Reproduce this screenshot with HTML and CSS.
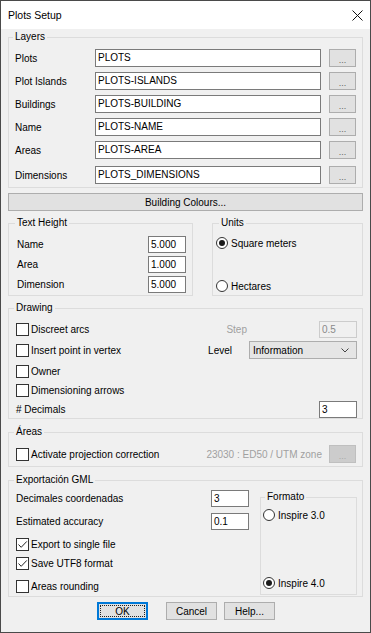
FILE: index.html
```html
<!DOCTYPE html>
<html lang="en">

<head>
    <meta charset="UTF-8">
    <title>Plots Setup</title>
    <link rel="stylesheet" href="styles.css">
</head>

<body>
    <div class="window">
        <div class="titlebar">
            <span class="title">Plots Setup</span>
            <svg class="close" width="11" height="11" viewBox="0 0 11 11">
                <path d="M0.5 0.5 L10.5 10.5 M10.5 0.5 L0.5 10.5" stroke="#111" stroke-width="1" fill="none" />
            </svg>
        </div>

        <div class="content">
            <fieldset class="group layers">
                <legend>Layers</legend>
                <div class="layer-row"><span>Plots</span><span class="field">PLOTS</span><span class="btn dots">...</span></div>
                <div class="layer-row"><span>Plot Islands</span><span class="field">PLOTS-ISLANDS</span><span class="btn dots">...</span></div>
                <div class="layer-row"><span>Buildings</span><span class="field">PLOTS-BUILDING</span><span class="btn dots">...</span></div>
                <div class="layer-row"><span>Name</span><span class="field">PLOTS-NAME</span><span class="btn dots">...</span></div>
                <div class="layer-row"><span>Areas</span><span class="field">PLOTS-AREA</span><span class="btn dots">...</span></div>
                <div class="layer-row last"><span>Dimensions</span><span class="field">PLOTS_DIMENSIONS</span><span class="btn dots">...</span></div>
            </fieldset>

            <div class="btn wide">Building Colours...</div>

            <div class="pair">
                <fieldset class="group text-height">
                    <legend>Text Height</legend>
                    <div class="th-row"><span>Name</span><span class="field num">5.000</span></div>
                    <div class="th-row"><span>Area</span><span class="field num">1.000</span></div>
                    <div class="th-row"><span>Dimension</span><span class="field num">5.000</span></div>
                </fieldset>
                <fieldset class="group units">
                    <legend>Units</legend>
                    <div class="radios units-radios">
                        <div class="opt"><span class="radio on"></span>Square meters</div>
                        <div class="opt"><span class="radio"></span>Hectares</div>
                    </div>
                </fieldset>
            </div>

            <fieldset class="group drawing">
                <legend>Drawing</legend>
                <div class="drow">
                    <div class="opt"><span class="check"></span>Discreet arcs</div>
                    <div class="right">
                        <span class="disabled step-label">Step</span>
                        <span class="field num off">0.5</span>
                    </div>
                </div>
                <div class="drow">
                    <div class="opt"><span class="check"></span>Insert point in vertex</div>
                    <div class="right">
                        <span class="level-label">Level</span>
                        <div class="select">
                            <span>Information</span>
                            <svg width="8" height="5" viewBox="0 0 8 5">
                                <path d="M0.5 0.5 L4 4 L7.5 0.5" stroke="#444" stroke-width="1" fill="none" />
                            </svg>
                        </div>
                    </div>
                </div>
                <div class="drow">
                    <div class="opt"><span class="check"></span>Owner</div>
                </div>
                <div class="drow close-up">
                    <div class="opt"><span class="check"></span>Dimensioning arrows</div>
                </div>
                <div class="drow short">
                    <span># Decimals</span>
                    <span class="field num">3</span>
                </div>
            </fieldset>

            <fieldset class="group areas">
                <legend>Áreas</legend>
                <div class="drow">
                    <div class="opt"><span class="check"></span>Activate projection correction</div>
                    <div class="right">
                        <span class="disabled">23030 : ED50 / UTM zone</span>
                        <span class="btn dots off">...</span>
                    </div>
                </div>
            </fieldset>

            <fieldset class="group gml">
                <legend>Exportación GML</legend>
                <div class="gml-body">
                    <div class="gml-left">
                        <div class="grow"><span>Decimales coordenadas</span><span class="field num">3</span></div>
                        <div class="grow"><span>Estimated accuracy</span><span class="field num">0.1</span></div>
                        <div class="grow"><div class="opt"><span class="check on"><svg width="11" height="11" viewBox="0 0 11 11"><path d="M1.5 5.5 L4.2 8.3 L9.8 2.4" stroke="#222" stroke-width="1" fill="none" /></svg></span>Export to single file</div></div>
                        <div class="grow tight"><div class="opt"><span class="check on"><svg width="11" height="11" viewBox="0 0 11 11"><path d="M1.5 5.5 L4.2 8.3 L9.8 2.4" stroke="#222" stroke-width="1" fill="none" /></svg></span>Save UTF8 format</div></div>
                        <div class="grow"><div class="opt"><span class="check"></span>Areas rounding</div></div>
                    </div>
                    <fieldset class="group formato">
                        <legend>Formato</legend>
                        <div class="radios formato-radios">
                            <div class="opt"><span class="radio"></span>Inspire 3.0</div>
                            <div class="opt"><span class="radio on"></span>Inspire 4.0</div>
                        </div>
                    </fieldset>
                </div>
            </fieldset>

            <div class="actions">
                <div class="btn action default"><span>OK</span></div>
                <div class="btn action cancel">Cancel</div>
                <div class="btn action">Help...</div>
            </div>
        </div>
    </div>
</body>

</html>
```

FILE: styles.css
```css
body {
    margin: 0;
    font-family: "Liberation Sans", Arial, sans-serif;
    font-size: 10px;
    color: #000;
}

.window {
    width: 371px;
    height: 633px;
    box-sizing: border-box;
    border: 1px solid #4a4a4a;
    background-color: #f0f0f0;
}

.titlebar {
    height: 28px;
    background-color: #ffffff;
    display: flex;
    align-items: center;
    justify-content: space-between;
    padding: 0 7px 0 7px;
}

.title {
    font-size: 10.5px;
}

.content {
    padding: 2px 7px 0 7px;
}

/* group boxes */
.group {
    margin: 0;
    min-width: 0;
    border: 1px solid #dcdcdc;
}

.group legend {
    padding: 0 2px;
    margin-left: -2px;
    line-height: 12px;
}

.field {
    box-sizing: border-box;
    height: 18px;
    line-height: 16px;
    padding: 0 2px;
    background-color: #ffffff;
    border: 1px solid #7a7a7a;
    white-space: nowrap;
}

.field.num {
    width: 38px;
    height: 17px;
    line-height: 15px;
}

.field.off {
    background-color: #f0f0f0;
    border-color: #cccccc;
    color: #8a8a8a;
}

.btn {
    box-sizing: border-box;
    height: 18px;
    background-color: #e1e1e1;
    border: 1px solid #adadad;
    display: flex;
    align-items: center;
    justify-content: center;
}

.btn.dots {
    width: 27px;
    font-size: 9px;
    color: #666;
    padding-top: 3px;
}

.btn.dots.off {
    background-color: #cccccc;
    border-color: #bfbfbf;
    color: #a8a8a8;
}

.disabled {
    color: #a0a0a0;
}

/* Layers */
.layers {
    padding: 6px 6px 3px 6px;
}

.layer-row {
    display: grid;
    grid-template-columns: 72px 226px 27px;
    column-gap: 8px;
    align-items: center;
    height: 18px;
    margin-bottom: 5px;
}

.layer-row.last {
    margin-top: 7px;
    margin-bottom: 0;
}

.btn.wide {
    margin-top: 5px;
}

/* Text Height + Units */
.pair {
    display: flex;
    gap: 19px;
    margin-top: 6px;
}

.text-height {
    width: 185px;
    box-sizing: border-box;
    padding: 7px 6px 2px 8px;
}

.th-row {
    display: flex;
    align-items: center;
    justify-content: space-between;
    height: 17px;
}

.th-row + .th-row {
    margin-top: 3px;
}

.units {
    flex: 1;
    padding: 7px 4px 2px 3px;
}

.units legend {
    margin-left: 3px;
}

.radios {
    display: flex;
    flex-direction: column;
    justify-content: space-between;
}

.units-radios {
    height: 57px;
}

.opt {
    display: flex;
    align-items: center;
    gap: 3px;
    height: 14px;
    white-space: nowrap;
}

.radio {
    box-sizing: border-box;
    width: 12px;
    height: 12px;
    border: 1px solid #333;
    border-radius: 50%;
    background-color: #ffffff;
    display: flex;
    align-items: center;
    justify-content: center;
}

.radio.on::after {
    content: "";
    width: 6px;
    height: 6px;
    border-radius: 50%;
    background-color: #1a1a1a;
}

.check {
    box-sizing: border-box;
    width: 13px;
    height: 13px;
    border: 1px solid #333;
    background-color: #ffffff;
    margin-right: -1px;
    display: flex;
}

/* Drawing */
.drawing {
    margin-top: 6px;
    padding: 6px 5px 1px 7px;
}

.drow {
    display: flex;
    align-items: center;
    justify-content: space-between;
    height: 18px;
}

.drow + .drow {
    margin-top: 3px;
}

.drow.close-up {
    margin-top: 1px;
}

.drow.short {
    height: 16px;
    margin-top: 2px;
}

.right {
    display: flex;
    align-items: center;
}

.step-label {
    margin-right: 72px;
}

.level-label {
    margin-right: 17px;
}

.select {
    box-sizing: border-box;
    width: 108px;
    height: 18px;
    padding: 0 7px 0 3px;
    background-color: #e5e5e5;
    border: 1px solid #adadad;
    display: flex;
    align-items: center;
    justify-content: space-between;
}

/* Areas */
.areas {
    margin-top: 7px;
    padding: 7px 6px 3px 7px;
}

.areas .disabled {
    margin-right: 7px;
}

/* GML */
.gml {
    margin-top: 7px;
    padding: 4px 5px 1px 7px;
}

.gml-body {
    display: flex;
    gap: 11px;
}

.gml-left {
    width: 233px;
}

.grow {
    display: flex;
    align-items: center;
    justify-content: space-between;
    height: 17px;
}

.grow + .grow {
    margin-top: 6px;
}

.grow.tight {
    margin-top: 2px;
}

.formato {
    flex: 1;
    margin-top: 1px;
    padding: 5px 3px 2px 2px;
}

.formato legend {
    margin-left: 2px;
}

.formato-radios {
    height: 82px;
}

/* dialog buttons */
.actions {
    display: flex;
    margin: 5px 0 0 89px;
}

.btn.action {
    width: 51px;
}

.btn.default {
    border: 2px solid #0078d7;
    padding: 1px;
}

.btn.default span {
    flex: 1;
    align-self: stretch;
    display: flex;
    align-items: center;
    justify-content: center;
    border: 1px dotted #222;
}

.btn.cancel {
    margin-left: 18px;
    margin-right: 7px;
}
```
